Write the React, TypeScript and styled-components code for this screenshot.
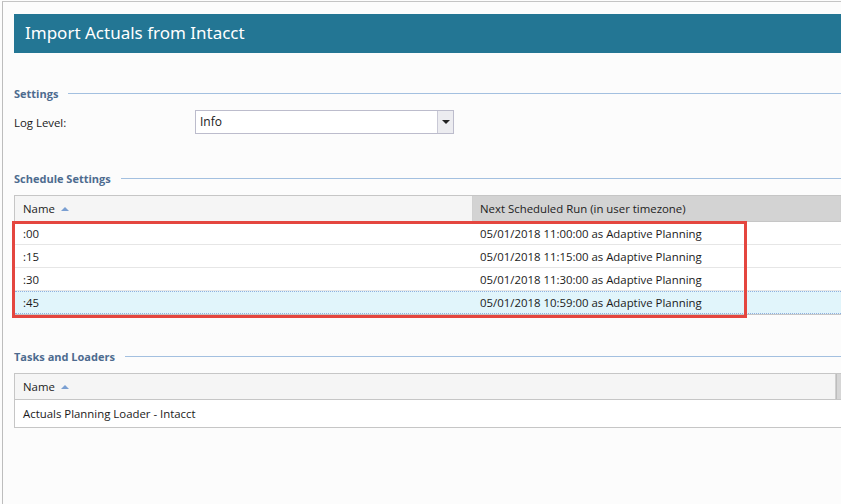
import styled, { createGlobalStyle } from 'styled-components'

const GlobalStyle = createGlobalStyle`
  html, body {
    margin: 0;
    padding: 0;
    background: #fcfcfc;
  }
  body {
    font-family: 'Open Sans', 'Noto Sans', sans-serif;
    font-size: 11.4px;
    color: #1a1a1a;
  }
`

const Frame = styled.div`
  margin: 1px 0 0 2px;
  height: calc(100vh - 1px);
  box-sizing: border-box;
  border-left: 1px solid #bdbdbd;
  border-top: 1px solid #c4c4c4;
  padding: 12px 0 0 11px;
  overflow: hidden;
`

const TitleBar = styled.div`
  height: 39px;
  line-height: 38px;
  background-color: #237694;
  color: #ffffff;
  padding-left: 11px;
  font-size: 17px;
  font-family: 'Noto Sans', sans-serif;
`

const Legend = styled.div<{ top: number }>`
  display: flex;
  align-items: center;
  margin-top: ${(p) => p.top}px;
  height: 16px;
  font-size: 11px;
  font-weight: 700;
  color: #4d6b8f;
`

const LegendLine = styled.div`
  flex: 1;
  height: 1px;
  margin-left: 10px;
  background-color: #a3c0e0;
`

const FieldRow = styled.div`
  display: flex;
  align-items: center;
  margin-top: 9px;
  height: 24px;
`

const FieldLabel = styled.div`
  width: 181px;
`

const Select = styled.div`
  display: flex;
  width: 259px;
  height: 24px;
  box-sizing: border-box;
  border: 1px solid #bcbccc;
  background: #ffffff;
`

const SelectValue = styled.div`
  flex: 1;
  line-height: 22px;
  padding-left: 4px;
  font-size: 12px;
`

const SelectButton = styled.div`
  width: 15px;
  display: flex;
  align-items: center;
  justify-content: center;
  border-left: 1px solid #c9c9d6;
  background: #ececf0;
`

const Caret = styled.div`
  width: 0;
  height: 0;
  border-left: 4px solid transparent;
  border-right: 4px solid transparent;
  border-top: 4px solid #222;
`

const Grid = styled.div`
  position: relative;
  margin-top: 9px;
  border: 1px solid #c6c6c6;
  border-right: none;
  background: #ffffff;
`

const HeaderRow = styled.div`
  display: flex;
  height: 25px;
  border-bottom: 1px solid #c6c6c6;
`

const HeaderCell = styled.div<{ width?: number; sorted?: boolean }>`
  display: flex;
  align-items: center;
  gap: 6px;
  ${(p) => (p.width ? `width: ${p.width}px;` : 'flex: 1;')}
  padding-left: ${(p) => (p.sorted ? 7 : 8)}px;
  box-sizing: border-box;
  background: ${(p) => (p.sorted ? '#d3d3d3' : '#f5f5f5')};
  border-right: 1px solid #d0d0d0;
  color: #222;
`

const ScrollStub = styled.div`
  width: 4px;
  background: #d6d6d6;
  border-left: 1px solid #bdbdbd;
`

const SortArrow = styled.span`
  width: 0;
  height: 0;
  border-left: 4px solid transparent;
  border-right: 4px solid transparent;
  border-bottom: 4px solid #7a9fd2;
`

const Row = styled.div<{ selected?: boolean; tall?: boolean }>`
  display: flex;
  height: ${(p) => (p.tall ? 27 : 23)}px;
  align-items: center;
  box-sizing: border-box;
  border-bottom: 1px solid #e6e6e6;
  ${(p) =>
    p.selected
      ? `background: #e1f5fb; border-top: 1px dotted #8fb0e0; border-bottom: 1px dotted #8fb0e0;`
      : ''}
  ${(p) => (p.tall ? 'border-bottom: none;' : '')}
`

const Cell = styled.div<{ width?: number }>`
  ${(p) => (p.width ? `width: ${p.width}px;` : 'flex: 1;')}
  padding-left: 8px;
  box-sizing: border-box;
  white-space: nowrap;
`

const Highlight = styled.div`
  position: absolute;
  left: -3px;
  top: 25px;
  width: 735px;
  height: 97px;
  box-sizing: border-box;
  border: 3px solid #e4463f;
  pointer-events: none;
`

const schedules = [
  { name: ':00', next: '05/01/2018 11:00:00 as Adaptive Planning' },
  { name: ':15', next: '05/01/2018 11:15:00 as Adaptive Planning' },
  { name: ':30', next: '05/01/2018 11:30:00 as Adaptive Planning' },
  { name: ':45', next: '05/01/2018 10:59:00 as Adaptive Planning', selected: true },
]

const App = () => {
  return (
    <>
      <GlobalStyle />
      <Frame>
        <TitleBar>Import Actuals from Intacct</TitleBar>

        <Legend top={32}>
          Settings
          <LegendLine />
        </Legend>
        <FieldRow>
          <FieldLabel>Log Level:</FieldLabel>
          <Select>
            <SelectValue>Info</SelectValue>
            <SelectButton>
              <Caret />
            </SelectButton>
          </Select>
        </FieldRow>

        <Legend top={36}>
          Schedule Settings
          <LegendLine />
        </Legend>
        <Grid>
          <HeaderRow>
            <HeaderCell width={458}>
              Name <SortArrow />
            </HeaderCell>
            <HeaderCell sorted>Next Scheduled Run (in user timezone)</HeaderCell>
          </HeaderRow>
          {schedules.map((s) => (
            <Row key={s.name} selected={s.selected}>
              <Cell width={457}>{s.name}</Cell>
              <Cell>{s.next}</Cell>
            </Row>
          ))}
          <Highlight />
        </Grid>

        <Legend top={33}>
          Tasks and Loaders
          <LegendLine />
        </Legend>
        <Grid>
          <HeaderRow>
            <HeaderCell>
              Name <SortArrow />
            </HeaderCell>
            <ScrollStub />
          </HeaderRow>
          <Row tall>
            <Cell>Actuals Planning Loader - Intacct</Cell>
          </Row>
        </Grid>
      </Frame>
    </>
  )
}

export default App
